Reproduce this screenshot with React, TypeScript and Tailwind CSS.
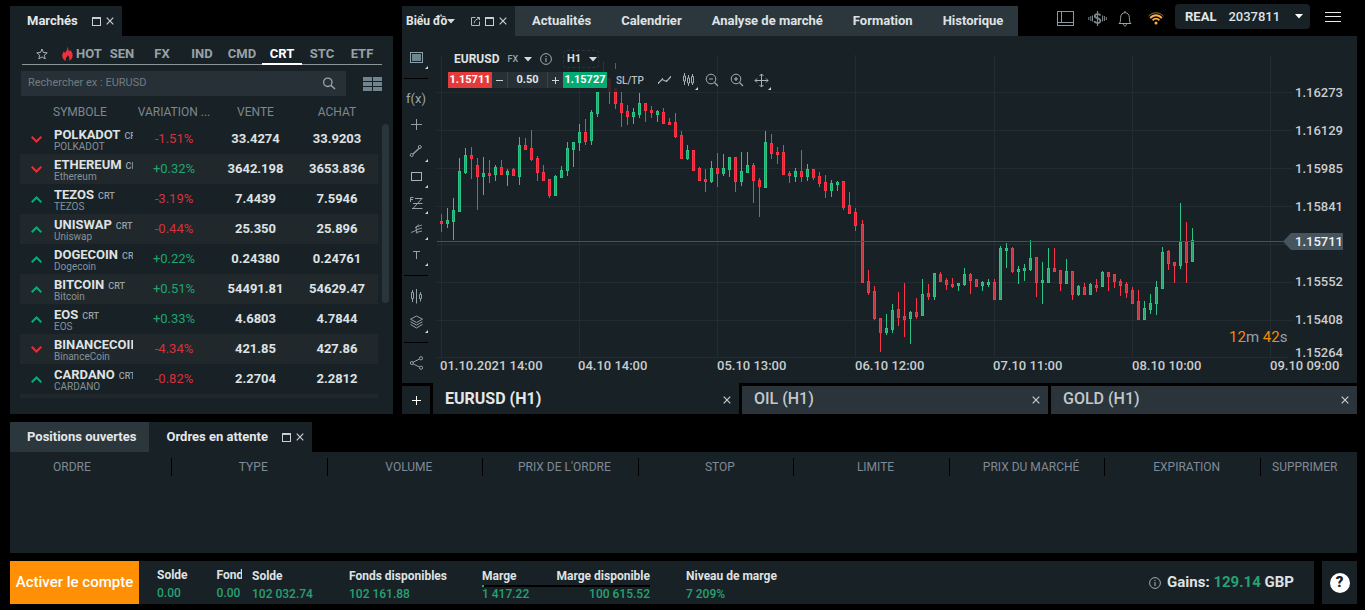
import React from "react";

type Dir = "up" | "down";
type Quote = { dir: Dir; name: string; sub: string; tag?: string; change: string; bid: string; ask: string };

const quotes: Quote[] = [
  { dir: "down", name: "POLKADOT", sub: "POLKADOT", tag: "CRT", change: "-1.51%", bid: "33.4274", ask: "33.9203" },
  { dir: "down", name: "ETHEREUM", sub: "Ethereum", tag: "CRT", change: "+0.32%", bid: "3642.198", ask: "3653.836" },
  { dir: "up", name: "TEZOS", sub: "TEZOS", tag: "CRT", change: "-3.19%", bid: "7.4439", ask: "7.5946" },
  { dir: "up", name: "UNISWAP", sub: "Uniswap", tag: "CRT", change: "-0.44%", bid: "25.350", ask: "25.896" },
  { dir: "up", name: "DOGECOIN", sub: "Dogecoin", tag: "CRT", change: "+0.22%", bid: "0.24380", ask: "0.24761" },
  { dir: "up", name: "BITCOIN", sub: "Bitcoin", tag: "CRT", change: "+0.51%", bid: "54491.81", ask: "54629.47" },
  { dir: "up", name: "EOS", sub: "EOS", tag: "CRT", change: "+0.33%", bid: "4.6803", ask: "4.7844" },
  { dir: "down", name: "BINANCECOIN", sub: "BinanceCoin", change: "-4.34%", bid: "421.85", ask: "427.86" },
  { dir: "up", name: "CARDANO", sub: "CARDANO", tag: "CRT", change: "-0.82%", bid: "2.2704", ask: "2.2812" },
];

// colour, wick top, body top, body bottom, wick bottom
type Candle = [string, number, number, number, number];
const candles: Candle[] = [
  ["r", 214, 221, 224, 232], ["g", 208, 220, 224, 228], ["g", 198, 210, 222, 240], ["g", 158, 171, 212, 212],
  ["g", 148, 155, 173, 174], ["r", 147, 155, 159, 179], ["r", 158, 165, 177, 210], ["g", 157, 173, 177, 195],
  ["r", 160, 173, 176, 183], ["g", 165, 167, 175, 181], ["r", 160, 167, 175, 175], ["g", 169, 171, 175, 186],
  ["r", 168, 169, 176, 176], ["g", 137, 145, 177, 185], ["r", 138, 145, 150, 150], ["r", 130, 148, 160, 161],
  ["r", 156, 158, 173, 181], ["r", 165, 172, 181, 181], ["r", 179, 179, 196, 198], ["g", 175, 176, 196, 196],
  ["g", 166, 170, 178, 178], ["g", 142, 148, 171, 176], ["g", 142, 142, 150, 167], ["g", 124, 132, 143, 151],
  ["r", 119, 132, 142, 145], ["g", 110, 112, 141, 145], ["g", 92, 92, 114, 117], ["n", 0, 0, 0, 0],
  ["r", 92, 92, 92, 104], ["r", 92, 92, 104, 109], ["r", 92, 103, 113, 127], ["r", 105, 111, 117, 125],
  ["g", 108, 112, 117, 124], ["g", 93, 103, 115, 118], ["r", 103, 103, 111, 122], ["r", 106, 110, 113, 118],
  ["g", 110, 111, 115, 122], ["r", 108, 112, 124, 124], ["r", 118, 122, 125, 125], ["r", 113, 122, 137, 138],
  ["r", 131, 135, 159, 159], ["g", 145, 150, 159, 160], ["r", 150, 150, 171, 171], ["r", 167, 168, 181, 181],
  ["r", 169, 179, 182, 192], ["g", 161, 168, 182, 183], ["r", 153, 168, 174, 187], ["g", 154, 168, 174, 176],
  ["g", 157, 157, 170, 177], ["r", 157, 157, 182, 192], ["g", 152, 171, 182, 186], ["g", 152, 165, 173, 173],
  ["r", 163, 165, 181, 203], ["r", 178, 180, 187, 217], ["g", 131, 142, 188, 188], ["r", 134, 143, 154, 159],
  ["r", 147, 152, 155, 164], ["r", 145, 152, 175, 175], ["r", 171, 173, 176, 183], ["g", 168, 171, 177, 182],
  ["r", 150, 171, 177, 182], ["g", 164, 169, 177, 181], ["r", 169, 169, 178, 180], ["r", 172, 176, 184, 187],
  ["r", 175, 182, 191, 198], ["g", 180, 183, 191, 197], ["g", 181, 182, 185, 191], ["r", 181, 181, 208, 210],
  ["r", 192, 205, 214, 214], ["r", 208, 212, 226, 231], ["r", 220, 224, 283, 283], ["r", 270, 281, 293, 295],
  ["r", 286, 291, 319, 320], ["r", 318, 318, 333, 352], ["g", 314, 328, 333, 335], ["g", 304, 310, 330, 333],
  ["r", 292, 309, 318, 326], ["r", 283, 316, 320, 337], ["g", 311, 312, 319, 344], ["r", 298, 312, 317, 319],
  ["g", 279, 294, 316, 316], ["r", 284, 293, 297, 300], ["g", 273, 273, 297, 300], ["r", 272, 274, 282, 282],
  ["r", 278, 280, 285, 290], ["r", 278, 284, 287, 288], ["g", 283, 283, 286, 291], ["g", 268, 274, 285, 286],
  ["r", 273, 274, 281, 294], ["r", 279, 279, 287, 287], ["g", 281, 282, 286, 291], ["g", 279, 282, 285, 287],
  ["r", 279, 282, 300, 300], ["g", 246, 248, 300, 300], ["g", 243, 248, 251, 268], ["r", 247, 248, 272, 273],
  ["g", 266, 269, 272, 284], ["g", 264, 268, 271, 281], ["g", 240, 258, 270, 271], ["r", 257, 257, 283, 297],
  ["g", 262, 280, 283, 304], ["g", 248, 268, 283, 283], ["r", 248, 268, 272, 272], ["r", 270, 270, 284, 291],
  ["g", 259, 271, 284, 284], ["r", 271, 271, 295, 300], ["g", 285, 286, 295, 296], ["r", 283, 287, 295, 295],
  ["g", 283, 284, 295, 295], ["r", 279, 285, 288, 292], ["g", 271, 272, 287, 287], ["r", 272, 272, 277, 291],
  ["r", 274, 274, 282, 288], ["r", 279, 281, 286, 296], ["r", 282, 284, 293, 298], ["r", 287, 290, 304, 304],
  ["r", 290, 301, 320, 320], ["g", 301, 308, 320, 320], ["g", 294, 303, 310, 314], ["g", 281, 287, 304, 315],
  ["g", 247, 252, 289, 289], ["r", 250, 251, 264, 270], ["r", 262, 262, 266, 283], ["g", 203, 242, 266, 269],
  ["r", 222, 242, 263, 283], ["g", 228, 240, 262, 262],
];

const candleX = (i: number) => (i < 70 ? 441 : 442) + 6 * i;

function MaxIcon() {
  return (
    <svg width="9" height="9" viewBox="0 0 9 9" shapeRendering="crispEdges" fill="none">
      <path d="M0.5 1V8.5H8.5V1" stroke="#c9ced0" />
      <rect x="0" y="0" width="9" height="2" fill="#c9ced0" />
    </svg>
  );
}

function CloseIcon() {
  return (
    <svg width="8" height="8" viewBox="0 0 8 8" fill="none" stroke="#c9ced0" strokeWidth="1.2">
      <path d="M0.7 0.7L7.3 7.3M7.3 0.7L0.7 7.3" />
    </svg>
  );
}

function PopIcon() {
  return (
    <svg width="9" height="9" viewBox="0 0 9 9" fill="none" stroke="#b4bbbf">
      <path d="M4.5 0.5H0.5V8.5H8.5V4.5M3.2 6.2C3.4 3.8 5 2.2 8 1.4M6 0.5H8.5V3" />
    </svg>
  );
}

function Caret({ fill = "#d7dbdd" }: { fill?: string }) {
  return (
    <svg width="8" height="5" viewBox="0 0 8 5" className="shrink-0">
      <path d="M0 0H8L4 4.6Z" fill={fill} />
    </svg>
  );
}

function InfoIcon({ size }: { size: number }) {
  return (
    <svg width={size} height={size} viewBox="0 0 12 12" fill="none" stroke="#a3abb0" className="shrink-0">
      <circle cx="6" cy="6" r="5.4" strokeWidth="1" />
      <path d="M6 5.1V9M6 3V4.1" strokeWidth="1.1" />
    </svg>
  );
}

function WindowButtons({ pop = false }: { pop?: boolean }) {
  return (
    <span className="flex items-center gap-[5px]">
      {pop && <button aria-label="Détacher"><PopIcon /></button>}
      <button aria-label="Agrandir"><MaxIcon /></button>
      <button aria-label="Fermer"><CloseIcon /></button>
    </span>
  );
}

function Markets() {
  const tabs = ["SEN", "FX", "IND", "CMD", "CRT", "STC", "ETF"];
  return (
    <section className="flex w-[383px] shrink-0 flex-col">
      <div className="flex h-8 items-end">
        <div className="flex h-[30px] items-center gap-3.5 bg-[#182126] pr-2 pl-[17px]">
          <h2 className="text-[13px] font-bold text-[#e4e7e8]">Marchés</h2>
          <WindowButtons />
        </div>
      </div>
      <div className="flex-1 bg-[#182126]">
        <nav className="mr-[11px] ml-3 grid h-[29px] grid-cols-9 border-b border-[#8b959a] pt-1.5 text-[13px] font-bold text-[#98a1a6]">
          <button aria-label="Favoris" className="flex h-[23px] items-center justify-center">
            <svg width="12" height="12" viewBox="0 0 12 12" fill="none" stroke="#a9b1b5" strokeLinejoin="round">
              <path d="M6 1L7.4 4.5L11.2 4.8L8.3 7.2L9.2 10.9L6 8.9L2.8 10.9L3.7 7.2L0.8 4.8L4.6 4.5Z" />
            </svg>
          </button>
          <button className="flex h-[23px] items-center justify-center gap-[3px]">
            <svg width="11" height="15" viewBox="0 0 11 15" className="shrink-0">
              <path d="M5.6 0C6.4 2.4 6 3.8 7 5.4C7.6 5 7.8 4.3 7.6 3.4C9.8 5.2 11 7.4 10.6 10C10.3 12.4 9 14 7.2 14.8C8 12.8 7.4 10.8 5.6 9C5.6 10.6 4.4 11 3.9 12.2C3.5 13.2 3.7 14 4 14.9C1.8 14.2 0.2 12.4 0.2 9.8C0.2 7.8 1.2 6.6 1.9 5C2.3 5.7 2.4 6.4 2.8 7C4.6 5.2 5.8 3 5.6 0Z" fill="#f0303a" />
            </svg>
            HOT
          </button>
          {tabs.map((t) => (
            <button key={t} className={t === "CRT" ? "h-[23px] border-b-2 border-white pt-0.5 text-white" : "h-[23px] border-b-2 border-transparent pt-0.5"}>
              {t}
            </button>
          ))}
        </nav>
        <div className="mt-1.5 mr-[11px] ml-[11px] flex items-center justify-between">
          <label className="flex h-[25px] w-[325px] items-center bg-[#263036] pr-2.5 pl-[7px]">
            <input
              aria-label="Rechercher"
              placeholder="Rechercher ex : EURUSD"
              className="min-w-0 flex-1 bg-transparent text-[11px] text-white outline-none placeholder:text-[#717c82]"
            />
            <svg width="14" height="13" viewBox="0 0 14 13" fill="none" stroke="#9aa5aa">
              <circle cx="5.8" cy="5.3" r="4.2" strokeWidth="1.3" />
              <path d="M8.8 8.3L13 12" strokeWidth="1.5" />
            </svg>
          </label>
          <button aria-label="Disposition">
            <svg width="19" height="14" viewBox="0 0 19 14" fill="#6f848e" shapeRendering="crispEdges">
              <path d="M0 0h9v4H0zM10 0h9v4h-9zM0 5h9v4H0zM10 5h9v4h-9zM0 10h9v4H0zM10 10h9v4h-9z" />
            </svg>
          </button>
        </div>
        <div className="mt-[3px] ml-2.5 flex">
          <div className="w-[358px]">
            <table className="w-full table-fixed border-collapse">
              <colgroup>
                <col className="w-[33px]" />
                <col className="w-20" />
                <col />
                <col className="w-[81px]" />
                <col className="w-[82px]" />
              </colgroup>
              <thead>
                <tr className="h-[25px] text-xs text-[#7d888e]">
                  <th className="p-0" />
                  <th className="p-0 text-left font-normal">SYMBOLE</th>
                  <th className="p-0 font-normal whitespace-nowrap">VARIATION ...</th>
                  <th className="p-0 font-normal">VENTE</th>
                  <th className="p-0 font-normal">ACHAT</th>
                </tr>
              </thead>
              <tbody>
                {quotes.map((q) => (
                  <tr key={q.name} className="h-[30px] even:bg-[#20282c]">
                    <td className="p-0 pl-[11px]">
                      <svg width="11" height="7" viewBox="0 0 11 7" fill="none" strokeWidth="2" className="block">
                        {q.dir === "up" ? <path d="M0.7 6.2L5.5 1.5L10.3 6.2" stroke="#12a776" /> : <path d="M0.7 0.8L5.5 5.5L10.3 0.8" stroke="#e2303a" />}
                      </svg>
                    </td>
                    <td className="overflow-hidden p-0 pt-0.5 pl-px whitespace-nowrap">
                      <div className="flex h-3.5 items-baseline gap-1 text-[13px] leading-[14px] font-bold text-[#dfe2e3]">
                        {q.name}
                        {q.tag && <span className="text-[9px] font-medium text-[#98a3a8]">{q.tag}</span>}
                      </div>
                      <div className="text-[10px] leading-[10px] text-[#84939a]">{q.sub}</div>
                    </td>
                    <td className={q.change[0] === "-" ? "p-0 text-center text-[13px] text-[#d8303a]" : "p-0 text-center text-[13px] text-[#1fa56f]"}>{q.change}</td>
                    <td className="p-0 text-center text-[13px] font-bold text-[#dfe2e3]">{q.bid}</td>
                    <td className="p-0 text-center text-[13px] font-bold text-[#dfe2e3]">{q.ask}</td>
                  </tr>
                ))}
              </tbody>
            </table>
            <div className="h-1 bg-[#20282c]" />
          </div>
          <div className="mt-[25px] ml-1 h-[179px] w-[7px] rounded-full bg-[#2a343b]" />
        </div>
      </div>
    </section>
  );
}

function Tool({ label, menu = false, children }: { label: string; menu?: boolean; children: React.ReactNode }) {
  return (
    <button aria-label={label} className="relative flex size-[26px] items-center justify-center">
      <svg width="16" height="16" viewBox="0 0 16 16" fill="none" stroke="#93a1a8">{children}</svg>
      {menu && (
        <svg width="3" height="3" viewBox="0 0 3 3" className="absolute right-0.5 bottom-0.5"><path d="M3 0V3H0Z" fill="#d0d5d7" /></svg>
      )}
    </button>
  );
}

function ToolBar() {
  const sep = "my-[7px] h-px w-6 bg-black";
  return (
    <div className="flex w-[35px] shrink-0 flex-col items-start pt-[9px] pl-0.5">
      <Tool label="Affichage" menu>
        <rect x="1.5" y="2.5" width="12" height="10" stroke="#8fa0a8" />
        <rect x="3" y="4" width="9" height="7" fill="#6f858f" stroke="none" />
      </Tool>
      <div className={sep} />
      <button className="flex h-[26px] w-6 items-center justify-center text-[13px] text-[#9aa8ae]">f(x)</button>
      <Tool label="Réticule"><path d="M7.5 2V13M2 7.5H13" shapeRendering="crispEdges" /></Tool>
      <Tool label="Ligne" menu>
        <path d="M4 11L10.5 5" strokeWidth="1.4" /><circle cx="2.7" cy="12" r="1.5" /><circle cx="10.8" cy="4" r="1.5" />
      </Tool>
      <Tool label="Rectangle" menu><rect x="2.5" y="3.5" width="10" height="8" stroke="#a9b4b9" /></Tool>
      <Tool label="Fibonacci" menu>
        <path d="M1.5 7V2.5H4.5M1.5 4.5H4M6 3.5H13.5M4 8.5H13.5M3 13.5H13.5M4.5 13L12.5 4" />
      </Tool>
      <Tool label="Fourche" menu>
        <path d="M2 11.5L7 9.5M6 6.5L13 4M6.5 9L13 7M7 11.5L13 10M8 12.5L7 6L10 3.5" strokeWidth="0.9" />
      </Tool>
      <Tool label="Texte" menu><path d="M4 4.5H11M7.5 4.5V12" shapeRendering="crispEdges" /></Tool>
      <div className={sep} />
      <Tool label="Comparer">
        <path d="M3.5 2V4.5M3.5 10.5V14M7.5 1V15.5M11.5 4V6.5M11.5 10.5V13.5M2.5 4.5H4.5V10.5H2.5ZM10.5 6.5H12.5V10.5H10.5Z" />
      </Tool>
      <Tool label="Calques" menu>
        <path d="M7.5 2L13.5 5.2L7.5 8.5L1.5 5.2ZM1.5 7.8L7.5 11.1L13.5 7.8M1.5 10.4L7.5 14L13.5 10.4" />
      </Tool>
      <div className={sep} />
      <Tool label="Partager">
        <path d="M4 7.3L10.5 4M4 8.9L10.5 12" /><circle cx="2.8" cy="8" r="1.5" /><circle cx="12" cy="3.3" r="1.6" /><circle cx="12" cy="12.7" r="1.6" />
      </Tool>
    </div>
  );
}

function Chart() {
  const rows = [92, 130, 168, 206, 244, 282, 320, 357];
  const cols = [441, 579, 717, 855, 994, 1132, 1270];
  const prices: [string, number][] = [["1.16273", 97], ["1.16129", 135], ["1.15985", 173], ["1.15841", 211], ["1.15552", 286], ["1.15408", 324], ["1.15264", 357]];
  const dates: [string, number][] = [["01.10.2021 14:00", 440], ["04.10 14:00", 578], ["05.10 13:00", 717], ["06.10 12:00", 855], ["07.10 11:00", 993], ["08.10 10:00", 1132], ["09.10 09:00", 1270]];
  return (
    <svg viewBox="437 36 920 347" className="block h-auto w-full" role="img" aria-label="EURUSD H1">
      <g shapeRendering="crispEdges">
        {rows.map((y) => <rect key={y} x="437" y={y} width={y === 357 ? 850 : 856} height="1" fill="#222c31" />)}
        {cols.map((x) => <rect key={x} x={x} y="55" width="1" height="303" fill="#222c31" />)}
        <rect x="603" y="61" width="1" height="11" fill="#4a2529" />
        <rect x="608" y="78" width="3" height="14" fill="#3a2428" />
        <rect x="614" y="88" width="3" height="4" fill="#3a2428" />
        <rect x="615" y="63" width="1" height="6" fill="#c92f3b" />
        {candles.map(([c, wt, bt, bb, wb], i) => {
          if (c === "n") return null;
          const x = candleX(i);
          const main = c === "r" ? "#fb3447" : "#2cc384";
          const core = c === "r" ? "#c73240" : "#27a56f";
          return (
            <g key={i}>
              <rect x={x} y={wt} width="1" height={wb - wt} fill={main} />
              {bb > bt && <rect x={x - 1} y={bt} width="3" height={bb - bt} fill={main} />}
              {bb - bt > 2 && <rect x={x} y={bt + 1} width="1" height={bb - bt - 2} fill={core} />}
            </g>
          );
        })}
        <rect x="437" y="241" width="850" height="1" fill="#44525a" />
      </g>
      <path d="M1283 241.5L1291 233H1343V250H1291Z" fill="#46555d" />
      <g fontFamily="Roboto, sans-serif" fontSize="13" fontWeight="500" fill="#c9cdcf">
        {prices.map(([t, y]) => <text key={t} x="1295" y={y}>{t}</text>)}
        {dates.map(([t, x]) => <text key={t} x={x} y="370">{t}</text>)}
        <text x="1295" y="246" fill="#f1f3f4">1.15711</text>
      </g>
      <text x="1229" y="342" fontFamily="Roboto, sans-serif" fontSize="15" fill="#98a1a6">
        <tspan fill="#f28a0c">12</tspan>m <tspan fill="#f28a0c">42</tspan>s
      </text>
    </svg>
  );
}

function TradeBar() {
  return (
    <div className="absolute top-3.5 left-[11px] flex flex-col gap-1">
      <div className="flex h-[18px] items-center pl-1.5 text-xs font-bold text-[#dfe2e3]">
        <button className="flex items-center">
          <span>EURUSD</span>
          <span className="mr-1.5 ml-2 text-[9px] font-medium text-[#9aa5aa]">FX</span>
          <Caret />
        </button>
        <button aria-label="Informations" className="ml-2"><InfoIcon size={12} /></button>
        <button className="ml-[11px] flex h-[18px] w-9 items-center gap-2 rounded-sm border border-dashed border-[#2b363c] pl-[3px] text-[11px]">H1 <Caret /></button>
      </div>
      <div className="flex h-4 items-center text-[11px] font-bold">
        <button className="h-4 w-11 bg-[#e43a3a] leading-4 text-white">1.15711</button>
        <div className="flex h-4 bg-[#263036] text-[#e4e7e8]">
          <button aria-label="Moins" className="flex w-[15px] items-center justify-center">
            <svg width="7" height="7" viewBox="0 0 7 7" stroke="#d0d5d7"><path d="M0 3.5H7" /></svg>
          </button>
          <input aria-label="Volume" defaultValue="0.50" className="w-[41px] border-x border-[#3a464d] bg-transparent text-center outline-none" />
          <button aria-label="Plus" className="flex w-[15px] items-center justify-center">
            <svg width="7" height="7" viewBox="0 0 7 7" stroke="#d0d5d7"><path d="M0 3.5H7M3.5 0V7" /></svg>
          </button>
        </div>
        <button className="h-4 w-11 bg-[#03ab73] leading-4 text-white">1.15727</button>
        <button className="ml-[9px] text-[10px] font-medium text-[#b9bfc2]">SL/TP</button>
        <button aria-label="Courbe" className="ml-[13px]">
          <svg width="15" height="14" viewBox="0 0 15 14" fill="none" stroke="#a3aeb3" strokeWidth="1.2">
            <path d="M1.5 10L5 6.5L9.5 8.5L13.5 4" /><path d="M1 10h1M5 6h1M9 8h1M13 4h1" strokeWidth="2" />
          </svg>
        </button>
        <button aria-label="Bougies" className="relative ml-2.5">
          <svg width="14" height="16" viewBox="0 0 14 16" fill="none" stroke="#a3aeb3">
            <path d="M2.5 1V4M2.5 9V13M6.5 3V6M6.5 11V14M10.5 2V4.5M10.5 11V13M1.5 4H3.5V9H1.5ZM5.5 6H7.5V11H5.5ZM9.5 4.5H11.5V11H9.5Z" />
          </svg>
          <svg width="3" height="3" viewBox="0 0 3 3" className="absolute -right-0.5 -bottom-0.5"><path d="M3 0V3H0Z" fill="#d0d5d7" /></svg>
        </button>
        <button aria-label="Zoom arrière" className="ml-[9px]">
          <svg width="14" height="14" viewBox="0 0 14 14" fill="none" stroke="#a3aeb3">
            <circle cx="6" cy="6" r="4.8" /><path d="M4 6H8M9.5 9.5L13 13" strokeWidth="1.2" />
          </svg>
        </button>
        <button aria-label="Zoom avant" className="ml-[11px]">
          <svg width="14" height="14" viewBox="0 0 14 14" fill="none" stroke="#a3aeb3">
            <circle cx="6" cy="6" r="4.8" /><path d="M4 6H8M6 4V8M9.5 9.5L13 13" strokeWidth="1.2" />
          </svg>
        </button>
        <button aria-label="Déplacer" className="relative ml-2.5">
          <svg width="15" height="15" viewBox="0 0 15 15" fill="none" stroke="#a9b4b9">
            <path d="M7.5 1V14M1 7.5H14M5.5 3L7.5 1L9.5 3M5.5 12L7.5 14L9.5 12M3 5.5L1 7.5L3 9.5M12 5.5L14 7.5L12 9.5" />
          </svg>
          <svg width="3" height="3" viewBox="0 0 3 3" className="absolute -right-0.5 -bottom-0.5"><path d="M3 0V3H0Z" fill="#d0d5d7" /></svg>
        </button>
      </div>
    </div>
  );
}

function ChartTab({ label, active = false }: { label: string; active?: boolean }) {
  return (
    <div className={active ? "flex h-[31px] flex-1 items-center justify-between bg-[#182126] pr-2 pl-3 font-bold text-[#e4e7e8]" : "mt-[3px] flex h-7 flex-1 items-center justify-between bg-[#2a343a] pr-2 pb-[3px] pl-3 font-medium text-[#c3c8ca]"}>
      <button className="text-base leading-5">{label}</button>
      <button aria-label="Fermer" className="mt-0.5"><CloseIcon /></button>
    </div>
  );
}

function TopIcons() {
  return (
    <div className="ml-auto flex h-[25px] items-center self-start pr-4">
      <button aria-label="Disposition" className="mt-1">
        <svg width="17" height="15" viewBox="0 0 17 15" fill="none" stroke="#8b979d" shapeRendering="crispEdges"><path d="M0.5 0.5H16.5V14.5H0.5ZM4.5 0.5V11.5M0.5 11.5H16.5" /></svg>
      </button>
      <button aria-label="Signaux" className="mt-1 ml-3.5">
        <svg width="19" height="15" viewBox="0 0 19 15" fill="none" stroke="#7c898f">
          <path d="M9.5 0V15" strokeWidth="1.2" />
          <path d="M12.4 4.6C12 3 7 2.4 6.8 5C6.6 7.6 12.4 6.8 12.4 9.8C12.4 12.8 6.8 12.4 6.5 10" strokeWidth="1.8" />
          <path d="M4.5 4.5V10.5M2.8 5V10M0.8 6V9M14.6 4.5V10.5M16.4 5V10M18.3 6V9" />
        </svg>
      </button>
      <button aria-label="Notifications" className="mt-1 ml-[11px]">
        <svg width="14" height="16" viewBox="0 0 14 16" fill="none" stroke="#98a4aa">
          <path d="M1 12.5C2.6 11.4 2.5 9.5 2.6 6.5C2.7 3.5 4.6 1.7 7 1.7C9.4 1.7 11.3 3.5 11.4 6.5C11.5 9.5 11.4 11.4 13 12.5ZM5.5 13C5.6 15.6 8.4 15.6 8.5 13M7 0V1.7" />
        </svg>
      </button>
      <button aria-label="Connexion" className="mt-1 ml-4">
        <svg width="16" height="13" viewBox="0 0 16 13" fill="none">
          <path d="M0.5 4.2C4.5 -0.4 11.5 -0.4 15.5 4.2" stroke="#8a6a3a" strokeWidth="1" />
          <path d="M2.2 6.2C5.5 2.3 10.5 2.3 13.8 6.2" stroke="#ffae42" strokeWidth="1.9" />
          <path d="M4.6 8.4C6.6 6.1 9.4 6.1 11.4 8.4" stroke="#ffae42" strokeWidth="1.8" />
          <circle cx="8" cy="10.9" r="1.5" fill="#ffae42" />
        </svg>
      </button>
      <button className="ml-[11px] flex h-[25px] w-[135px] items-center rounded-sm bg-[#182126] pr-[7px] pl-2.5 text-[13px] font-bold text-[#e4e7e8]">
        REAL
        <span className="ml-3 font-medium text-[#dfe2e3]">2037811</span>
        <span className="ml-auto"><Caret fill="#ffffff" /></span>
      </button>
      <button aria-label="Menu" className="ml-[15px]">
        <svg width="16" height="10" viewBox="0 0 16 10" fill="#e9ebec" shapeRendering="crispEdges"><path d="M0 0h16v1H0zM0 4h16v1H0zM0 9h16v1H0z" /></svg>
      </button>
    </div>
  );
}

function ChartPanel() {
  const links = ["Actualités", "Calendrier", "Analyse de marché", "Formation", "Historique"];
  return (
    <section className="flex min-w-0 flex-1 flex-col">
      <header className="flex h-8 items-end">
        <div className="flex h-[30px] w-[113px] items-center justify-between bg-[#182126] pr-2 pl-1">
          <button className="flex items-center text-xs font-bold text-[#e4e7e8]">Biểu đồ<Caret /></button>
          <WindowButtons pop />
        </div>
        <nav className="flex h-[30px] items-center bg-[#2c373d] pl-0.5 text-[13px] font-bold text-[#dfe2e3]">
          {links.map((l) => <a key={l} href={"#" + l} className="px-[15px] whitespace-nowrap">{l}</a>)}
        </nav>
        <TopIcons />
      </header>
      <div className="flex bg-[#182126]">
        <ToolBar />
        <div className="relative min-w-0 flex-1">
          <Chart />
          <TradeBar />
        </div>
      </div>
      <div className="flex gap-[3px]">
        <button aria-label="Ajouter" className="mt-[3px] flex h-7 w-7 items-center justify-center bg-[#182126]">
          <svg width="9" height="9" viewBox="0 0 9 9" stroke="#ffffff" shapeRendering="crispEdges"><path d="M0 4.5H9M4.5 0V9" /></svg>
        </button>
        <ChartTab label="EURUSD (H1)" active />
        <ChartTab label="OIL (H1)" />
        <ChartTab label="GOLD (H1)" />
      </div>
    </section>
  );
}

function Orders() {
  const middle = ["TYPE", "VOLUME", "PRIX DE L'ORDRE", "STOP", "LIMITE", "PRIX DU MARCHÉ", "EXPIRATION"];
  return (
    <section>
      <div className="flex h-[30px] text-[13px] font-bold text-[#e4e7e8]">
        <button className="bg-[#2c373d] pr-[13px] pl-[17px]">Positions ouvertes</button>
        <div className="flex items-center gap-3.5 bg-[#182126] pr-2 pl-[17px]">
          <h2>Ordres en attente</h2>
          <WindowButtons />
        </div>
      </div>
      <div className="h-[101px] bg-[#182126] pt-1.5">
        <table className="w-full table-fixed border-collapse text-xs leading-[18px] text-[#7f8a96]">
          <thead>
            <tr>
              <th className="w-[162px] p-0 font-normal"><div className="border-r border-black pl-[43px] text-left">ORDRE</div></th>
              {middle.map((m) => <th key={m} className="p-0 font-normal"><div className="border-r border-black pl-2">{m}</div></th>)}
              <th className="w-24 p-0 font-normal"><div className="pl-[11px] text-left">SUPPRIMER</div></th>
            </tr>
          </thead>
        </table>
      </div>
    </section>
  );
}

function Stat({ label, value, right = false }: { label: string; value: string; right?: boolean }) {
  return (
    <div className={right ? "text-right whitespace-nowrap" : "whitespace-nowrap"}>
      <div className="text-xs leading-4 font-bold text-[#dfe2e3]">{label}</div>
      <div className="mt-0.5 text-xs leading-4 font-medium text-[#27a271]">{value}</div>
    </div>
  );
}

function Footer() {
  return (
    <footer className="flex h-[43px] items-stretch">
      <button className="w-[129px] bg-[#ff8f05] text-[15px] font-medium whitespace-nowrap text-white">Activer le compte</button>
      <div className="flex min-w-0 flex-1 items-stretch bg-[#182126]">
        <div className="flex w-[103px] gap-[29px] overflow-hidden pt-1.5 pl-[18px]">
          <Stat label="Solde" value="0.00" />
          <Stat label="Fonds" value="0.00" />
        </div>
        <div className="flex pt-[7px] pl-2.5">
          <div className="w-[97px]"><Stat label="Solde" value="102 032.74" /></div>
          <div className="w-[133px]"><Stat label="Fonds disponibles" value="102 161.88" /></div>
          <div className="relative mr-9 flex w-[168px] justify-between">
            <Stat label="Marge" value="1 417.22" />
            <Stat label="Marge disponible" value="100 615.52" right />
            <div className="absolute top-[17px] h-0.5 w-full bg-black"><div className="h-full w-0.5 bg-[#27a271]" /></div>
          </div>
          <Stat label="Niveau de marge" value="7 209%" />
        </div>
        <div className="ml-auto flex items-center gap-1.5 pr-5 text-[15px] font-bold text-[#dfe2e3]">
          <InfoIcon size={12} />
          <p>Gains: <span className="text-[#27a271]">129.14</span> GBP</p>
        </div>
      </div>
      <button aria-label="Aide" className="ml-2 flex w-[35px] items-center justify-center bg-[#182126]">
        <span className="flex size-5 items-center justify-center rounded-full bg-white text-[15px] font-black text-[#182126]">?</span>
      </button>
    </footer>
  );
}

export default function App() {
  return (
    <main className="flex min-h-screen flex-col gap-2 bg-black pt-1 pr-2 pb-1.5 pl-2.5 font-[Roboto,'Noto_Sans',sans-serif]">
      <div className="flex gap-[9px]">
        <Markets />
        <ChartPanel />
      </div>
      <Orders />
      <Footer />
    </main>
  );
}
